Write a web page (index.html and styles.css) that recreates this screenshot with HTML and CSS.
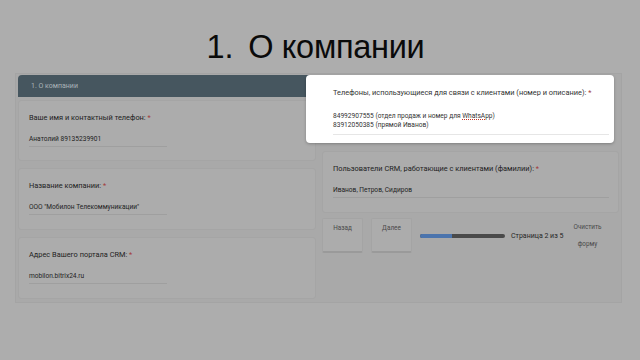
FILE: index.html
```html
<!DOCTYPE html>
<html lang="ru">
<head>
  <meta charset="UTF-8" />
  <title>1. О компании</title>
  <link rel="stylesheet" href="styles.css">
</head>
<body>
  <h1 class="slide-title"><span class="num">1.</span>О компании</h1>

  <div class="form">
    <div class="col left">
      <div class="form-head">1. О компании</div>

      <div class="card first">
        <div class="label">Ваше имя и контактный телефон: <span class="req">*</span></div>
        <div class="value">Анатолий 89135239901</div>
      </div>

      <div class="card">
        <div class="label">Название компании: <span class="req">*</span></div>
        <div class="value">ООО "Мобилон Телекоммуникации"</div>
      </div>

      <div class="card">
        <div class="label">Адрес Вашего портала CRM: <span class="req">*</span></div>
        <div class="value">mobilon.bitrix24.ru</div>
      </div>
    </div>

    <div class="col right">
      <div class="card focus">
        <div class="label">Телефоны, использующиеся для связи с клиентами (номер и описание): <span class="req">*</span></div>
        <div class="value wide">
          84992907555 (отдел продаж и номер для <span class="spell">WhatsApp</span>)<br>
          83912050385 (прямой Иванов)
        </div>
      </div>

      <div class="card">
        <div class="label">Пользователи CRM, работающие с клиентами (фамилии): <span class="req">*</span></div>
        <div class="value wide">Иванов, Петров, Сидиров</div>
      </div>

      <div class="nav-row">
        <div class="btn">Назад</div>
        <div class="btn">Далее</div>
        <div class="progress">
          <div class="bar"><div class="fill" style="width: 38%"></div></div>
          <span>Страница 2 из 5</span>
        </div>
        <div class="clear">Очистить<br>форму</div>
      </div>
    </div>
  </div>
</body>
</html>
```

FILE: styles.css
```css
* { box-sizing: border-box; margin: 0; padding: 0; }
body {
  background-color: #adadad;
  color: #262626;
  font-family: Roboto, "Noto Sans", sans-serif;
  width: 640px;
  height: 360px;
  overflow: hidden;
}
.slide-title {
  color: #0a0a0a;
  font-family: "Liberation Sans", Arial, sans-serif;
  font-size: 32.5px;
  font-weight: normal;
  height: 73px;
  letter-spacing: -0.3px;
  padding-top: 29px;
  padding-right: 9px;
  text-align: center;
}
.slide-title .num { margin-right: 15px; }
.form {
  display: flex;
  margin-left: 15px;
  width: 607px;
  height: 230px;
}
.col {
  display: flex;
  flex-direction: column;
}
.left {
  background-color: #a9a9a9;
  border: 1px solid #a4a4a4;
  border-right: none;
  padding: 1px 2px 2px 2px;
  width: 303px;
}
.right {
  background-color: #a9a9a9;
  border: 1px solid #a4a4a4;
  border-left: none;
  padding: 1px 2px 2px 4px;
  width: 304px;
}
.form-head {
  background-color: #46565f;
  border-radius: 4px 4px 0 0;
  color: #aab4b9;
  font-size: 7px;
  height: 22px;
  line-height: 22px;
  padding-left: 13px;
}
.card {
  background-color: #acacac;
  border: 1px solid #a5a5a5;
  border-radius: 3px;
  height: 62px;
  margin-top: 7px;
  padding: 12px 0 0 10px;
}
.card.first { margin-top: 3px; height: 61px; }
.label {
  color: #1e1e1e;
  font-size: 7.4px;
  height: 22px;
}
.req { color: #a33a3a; }
.value {
  border-bottom: 1px solid #9f9f9f;
  color: #1e1e1e;
  font-size: 6.6px;
  padding-bottom: 3px;
  width: 138px;
}
.value.wide { width: 276px; }
.focus {
  background-color: #fff;
  border: none;
  border-radius: 4px;
  box-shadow: 0 1px 3px rgba(0, 0, 0, 0.25);
  height: 68px;
  margin: 0 0 0 -16px;
  padding: 13px 0 0 27px;
  position: relative;
  width: 308px;
  z-index: 2;
}
.focus .label { color: #333; height: 24px; }
.focus .value { border-bottom-color: #e6e6e6; color: #333; line-height: 9px; padding-bottom: 4px; }
.spell {
  text-decoration: underline dotted #c0392b;
  text-underline-offset: 1px;
}
.right .card + .card { margin-top: 8px; }
.nav-row {
  align-items: flex-start;
  display: flex;
  height: 41px;
  margin-top: 4px;
  padding-top: 1px;
}
.btn {
  background-color: #acacac;
  border: 1px solid #a4a4a4;
  border-bottom: 2px solid #9a9a9a;
  border-radius: 2px;
  color: #4a4a4a;
  font-size: 6.4px;
  height: 35px;
  padding-top: 5px;
  text-align: center;
  width: 41px;
  margin-right: 8px;
}
.progress {
  align-items: center;
  display: flex;
  font-size: 7px;
  gap: 6px;
  margin-top: 14px;
}
.bar {
  background-color: #4a4a4a;
  border-radius: 3px;
  height: 4px;
  overflow: hidden;
  width: 85px;
}
.fill {
  background-color: #4b74ad;
  height: 100%;
}
.clear {
  color: #4a4a4a;
  font-size: 6.4px;
  line-height: 17px;
  margin-left: 10px;
  padding-top: 1px;
  text-align: center;
}
```
